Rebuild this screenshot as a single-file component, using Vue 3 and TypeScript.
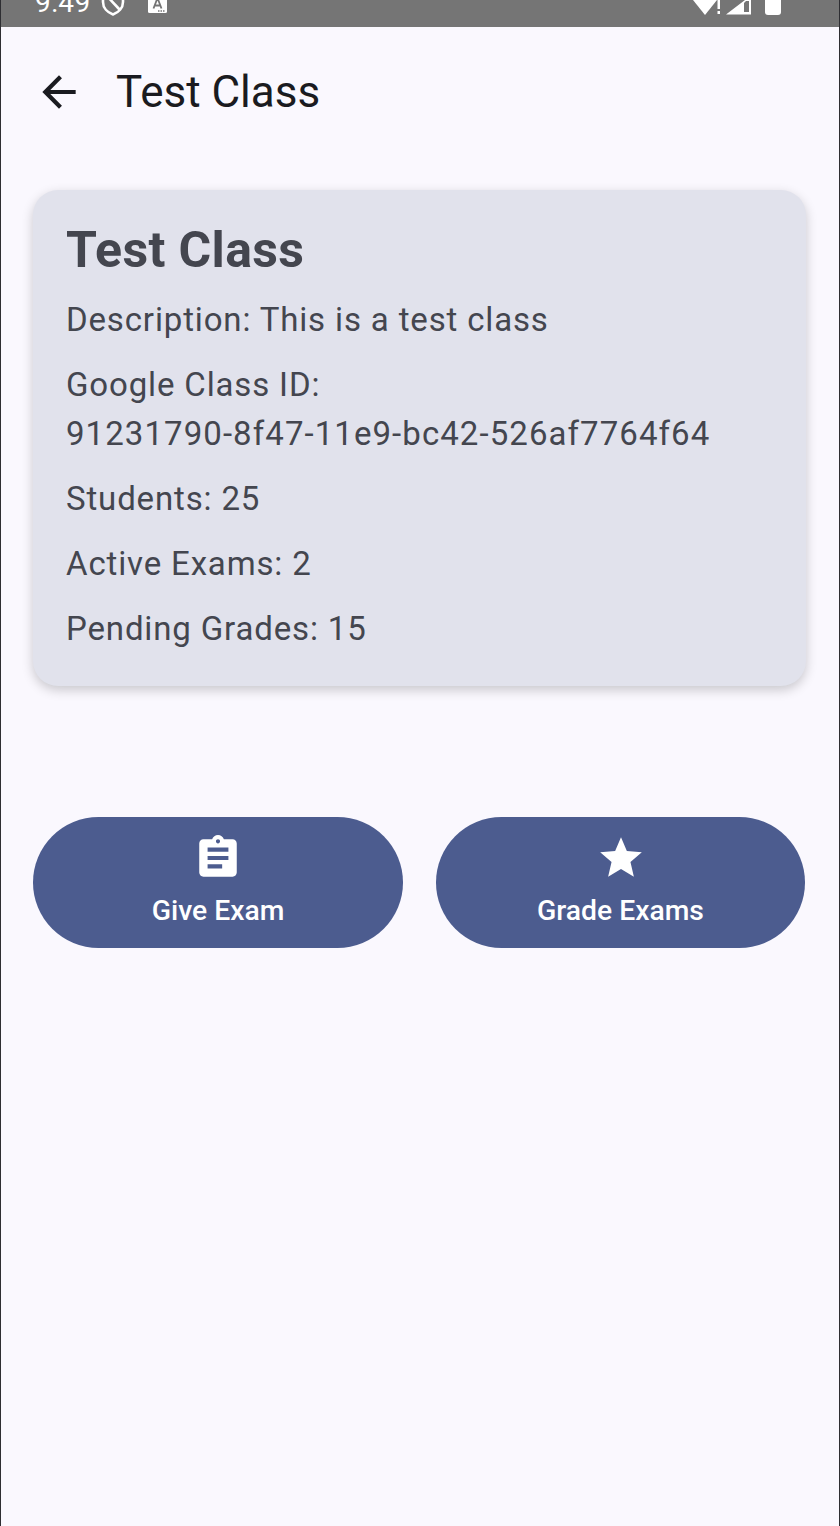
<template>
  <div class="screen">
    <div class="status-bar">
      <div class="status-left">
        <span class="clock">9:49</span>
        <svg class="dnd" width="24" height="26" viewBox="0 0 24 26">
          <path d="M12 1.500 L22 5 V12 C22 18 17.500 22.500 12 24.500 C6.500 22.500 2 18 2 12 V5 Z" fill="none" stroke="#fff" stroke-width="2.600" stroke-linejoin="round" />
          <path d="M5 5 L19 20" stroke="#fff" stroke-width="2.600" />
        </svg>
        <svg class="a-icon" width="19" height="19" viewBox="0 0 19 19">
          <rect x="0" y="0" width="19" height="19" rx="1.500" fill="#fff" />
          <path d="M5.500 14.500 L9.500 4 L13.500 14.500 M7 11.500 H12" fill="none" stroke="#757575" stroke-width="1.800" />
          <path d="M10 17 h1.500 M12.500 17 h1.500 M15 17 h1.500" stroke="#757575" stroke-width="1.300" />
        </svg>
      </div>
      <div class="status-right">
        <svg width="24" height="15" viewBox="0 0 24 15">
          <path d="M0 0 H24 L12 15 Z" fill="#fff" />
        </svg>
        <svg class="bang" width="4" height="15" viewBox="0 0 4 15">
          <path d="M0.500 0 H3 V9 H0.500 Z M0.500 11 H3 V14 H0.500 Z" fill="#fff" />
        </svg>
        <svg class="signal" width="25" height="15" viewBox="0 0 25 15">
          <path d="M0 14.500 L19 0 H25 V14.500 Z M18 3 V12 H23 V1 H20 Z" fill="#fff" fill-rule="evenodd" />
        </svg>
        <div class="battery"></div>
      </div>
    </div>

    <header class="top-bar">
      <svg class="back" width="50" height="50" viewBox="0 0 24 24">
        <path d="M20 11H7.830l5.590-5.590L12 4l-8 8 8 8 1.410-1.410L7.830 13H20v-2z" fill="#1a1b20" />
      </svg>
      <h1 class="top-title">Test Class</h1>
    </header>

    <section class="card">
      <h2 class="card-title">{{ info.name }}</h2>
      <p>Description: {{ info.description }}</p>
      <p>Google Class ID: <span class="class-id">{{ info.googleId }}</span></p>
      <p>Students: {{ info.students }}</p>
      <p>Active Exams: {{ info.activeExams }}</p>
      <p>Pending Grades: {{ info.pendingGrades }}</p>
    </section>

    <div class="actions">
      <button class="action">
        <svg width="50" height="50" viewBox="0 0 24 24">
          <path d="M19 3h-4.180C14.400 1.840 13.300 1 12 1s-2.400.840-2.820 2H5c-1.100 0-2 .900-2 2v14c0 1.100.900 2 2 2h14c1.100 0 2-.900 2-2V5c0-1.100-.900-2-2-2zm-7 0c.550 0 1 .450 1 1s-.450 1-1 1-1-.450-1-1 .450-1 1-1zm2 14H7v-2h7v2zm3-4H7v-2h10v2zm0-4H7V7h10v2z" fill="#fff" />
        </svg>
        <span>Give Exam</span>
      </button>
      <button class="action">
        <svg width="50" height="50" viewBox="0 0 24 24">
          <path d="M12 17.270 18.180 21l-1.640-7.030L22 9.240l-7.190-.610L12 2 9.190 8.630 2 9.240l5.460 4.730L5.820 21z" fill="#fff" />
        </svg>
        <span>Grade Exams</span>
      </button>
    </div>
  </div>
</template>

<script setup lang="ts">
const info = {
  name: "Test Class",
  description: "This is a test class",
  googleId: "91231790-8f47-11e9-bc42-526af7764f64",
  students: 25,
  activeExams: 2,
  pendingGrades: 15,
};
</script>

<style>
html,
body {
  margin: 0;
  background: #faf8fe;
}
</style>

<style scoped>
.screen {
  box-sizing: border-box;
  width: 840px;
  height: 1526px;
  overflow: hidden;
  background: #faf8fe;
  border-left: 1px solid #2e2e32;
  border-right: 1px solid #2e2e32;
  font-family: Roboto, sans-serif;
}

.status-bar {
  height: 27px;
  background: #757575;
  display: flex;
  justify-content: space-between;
  align-items: flex-end;
  overflow: hidden;
  padding: 0 58px 0 34px;
  color: #fff;
}

.status-left {
  display: flex;
  align-items: center;
  height: 40px;
  flex-shrink: 0;
  margin-bottom: 4px;
}

.clock {
  font-size: 28px;
  letter-spacing: 0.4px;
  line-height: 40px;
}

.dnd {
  margin-left: 10px;
}

.a-icon {
  margin-left: 23px;
}

.status-right {
  display: flex;
  align-items: flex-end;
  padding-bottom: 12px;
}

.bang {
  margin-left: 0;
}

.signal {
  margin-left: 5px;
}

.battery {
  width: 16px;
  height: 30px;
  margin-left: 14px;
  background: #fff;
  border-radius: 3px;
}

.top-bar {
  height: 130px;
  display: flex;
  align-items: center;
  padding-left: 33px;
}

.top-title {
  margin: 0 0 0 32px;
  font-size: 44px;
  font-weight: 400;
  color: #1a1b20;
}

.card {
  margin: 33px 33px 0 32px;
  padding: 33px;
  height: 496px;
  box-sizing: border-box;
  background: #e1e2ec;
  border-radius: 25px;
  box-shadow: 0 4px 12px rgba(0, 0, 0, 0.2);
  color: #44464f;
}

.card-title {
  margin: 0 0 18px;
  font-size: 50px;
  line-height: 54px;
  font-weight: 700;
  letter-spacing: 0.35px;
}

.card p {
  margin: 0 0 16.1px;
  font-size: 33px;
  line-height: 49px;
  letter-spacing: 0.85px;
}

.class-id {
  white-space: nowrap;
  letter-spacing: 1.07px;
}

.actions {
  display: grid;
  grid-template-columns: 370px 369px;
  column-gap: 33px;
  margin: 131px 0 0 32px;
}

.action {
  height: 131px;
  border: none;
  border-radius: 66px;
  background: #4c5c8f;
  color: #fff;
  font-family: inherit;
  font-size: 28.3px;
  font-weight: 500;
  display: flex;
  flex-direction: column;
  align-items: center;
  justify-content: center;
  gap: 11px;
  padding: 0 0 5px;
}
</style>
